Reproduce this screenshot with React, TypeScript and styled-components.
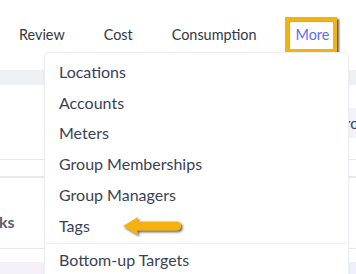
import { FC } from 'react';
import styled, { createGlobalStyle } from 'styled-components';

const GlobalStyle = createGlobalStyle`
    html, body {
        margin: 0;
        padding: 0;
        background: #ffffff;
    }
    body {
        font-family: 'Lato', 'Noto Sans', sans-serif;
    }
`;

const menuItems = [
    'Locations',
    'Accounts',
    'Meters',
    'Group Memberships',
    'Group Managers',
    'Tags',
];

const App: FC = () => {
    return (
        <>
            <GlobalStyle />
            <Page>
                <NavBar>
                    <NavLink>Review</NavLink>
                    <NavLink>Cost</NavLink>
                    <NavLink>Consumption</NavLink>
                    <Highlight>
                        <NavLink active>More</NavLink>
                    </Highlight>
                </NavBar>
                <Content>
                    <Spacer h={17} />
                    <Band tone="#f0f1f4" h={15} />
                    <Row h={74}>
                        <RightCell>ro</RightCell>
                    </Row>
                    <Divider />
                    <Row h={16} />
                    <Divider thick />
                    <Row h={70}>
                        <LeftLabel>nks</LeftLabel>
                    </Row>
                    <Divider />
                    <Row h={13} />
                    <BottomBand />
                </Content>

                <Dropdown>
                    {menuItems.map((item) => (
                        <MenuItem key={item}>
                            {item}
                            {item === 'Tags' && (
                                <Arrow width="64" height="22" viewBox="0 0 64 22">
                                    <defs>
                                        <filter id="sh" x="-20%" y="-40%" width="140%" height="180%">
                                            <feDropShadow dx="1.5" dy="1.5" stdDeviation="0.9" floodColor="#262626" floodOpacity="0.8" />
                                        </filter>
                                    </defs>
                                    <path
                                        d="M2 11 L17 2 L16 6.5 L55 6.5 Q60 6.5 60 11 Q60 15.5 55 15.5 L16 15.5 L17 20 Z"
                                        fill="#f5b10c"
                                        filter="url(#sh)"
                                    />
                                </Arrow>
                            )}
                        </MenuItem>
                    ))}
                    <MenuSeparator />
                    <MenuItem>Bottom-up Targets</MenuItem>
                </Dropdown>
            </Page>
        </>
    );
};

const Page = styled.div`
    position: relative;
    width: 356px;
    height: 274px;
    overflow: hidden;
    background: #ffffff;
`;

const NavBar = styled.div`
    display: flex;
    align-items: center;
    height: 53px;
    padding-left: 19px;
`;

const NavLink = styled.div<{ active?: boolean }>`
    font-size: 14.4px;
    color: ${(p) => (p.active ? '#5b6cf8' : '#34373f')};
    margin-right: 39px;
    line-height: 20px;
    padding-top: 16px;
`;

const Highlight = styled.div`
    display: flex;
    align-items: center;
    margin-left: -11px;
    margin-top: 17px;
    height: 28px;
    padding: 0 4px 0 7px;
    border: 4px solid #f3b30f;
    box-shadow: 2px 2px 2px rgba(30, 30, 30, 0.75),
        inset 1px 1px 1px rgba(30, 30, 30, 0.4);

    ${NavLink} {
        margin: 0;
        padding-top: 0;
    }
`;

const Content = styled.div`
    display: flex;
    flex-direction: column;
`;

const Spacer = styled.div<{ h: number }>`
    height: ${(p) => p.h}px;
`;

const Band = styled.div<{ tone: string; h: number }>`
    height: ${(p) => p.h}px;
    background: ${(p) => p.tone};
`;

const BottomBand = styled.div`
    height: 20px;
    background: linear-gradient(to right, #f6f0f8 0, #f6f0f8 348px, #eef0fb 348px);
`;

const Row = styled.div<{ h: number }>`
    position: relative;
    height: ${(p) => p.h}px;
    display: flex;
    align-items: center;
`;

const Divider = styled.div<{ thick?: boolean }>`
    height: ${(p) => (p.thick ? 2 : 1)}px;
    background: ${(p) => (p.thick ? '#e8e9ec' : '#e4e7f0')};
`;

const RightCell = styled.div`
    align-self: flex-start;
    margin-left: auto;
    margin-top: 23px;
    width: 10px;
    height: 30px;
    background: #f2f4fd;
    font-size: 15px;
    line-height: 30px;
    color: #3a3f55;
    overflow: hidden;
    white-space: nowrap;
    text-indent: -1px;
`;

const LeftLabel = styled.div`
    font-size: 16px;
    font-weight: 700;
    color: #5a5d66;
    margin-left: -10px;
    margin-top: 16px;
`;

const Dropdown = styled.div`
    position: absolute;
    left: 44px;
    top: 52px;
    width: 305px;
    height: 240px;
    box-sizing: border-box;
    padding-top: 3px;
    background: #ffffff;
    border: 1px solid #eceef3;
    border-radius: 5px;
    box-shadow: 0 1px 3px rgba(40, 50, 80, 0.08);
`;

const MenuItem = styled.div`
    position: relative;
    height: 30.8px;
    display: flex;
    align-items: center;
    padding-left: 14px;
    font-size: 16px;
    color: #3b3f56;
`;

const MenuSeparator = styled.div`
    height: 1px;
    margin: 2px 0 0 0;
    background: #eeeff2;
`;

const Arrow = styled.svg`
    position: absolute;
    left: 76px;
    top: 5px;
`;

export default App;
